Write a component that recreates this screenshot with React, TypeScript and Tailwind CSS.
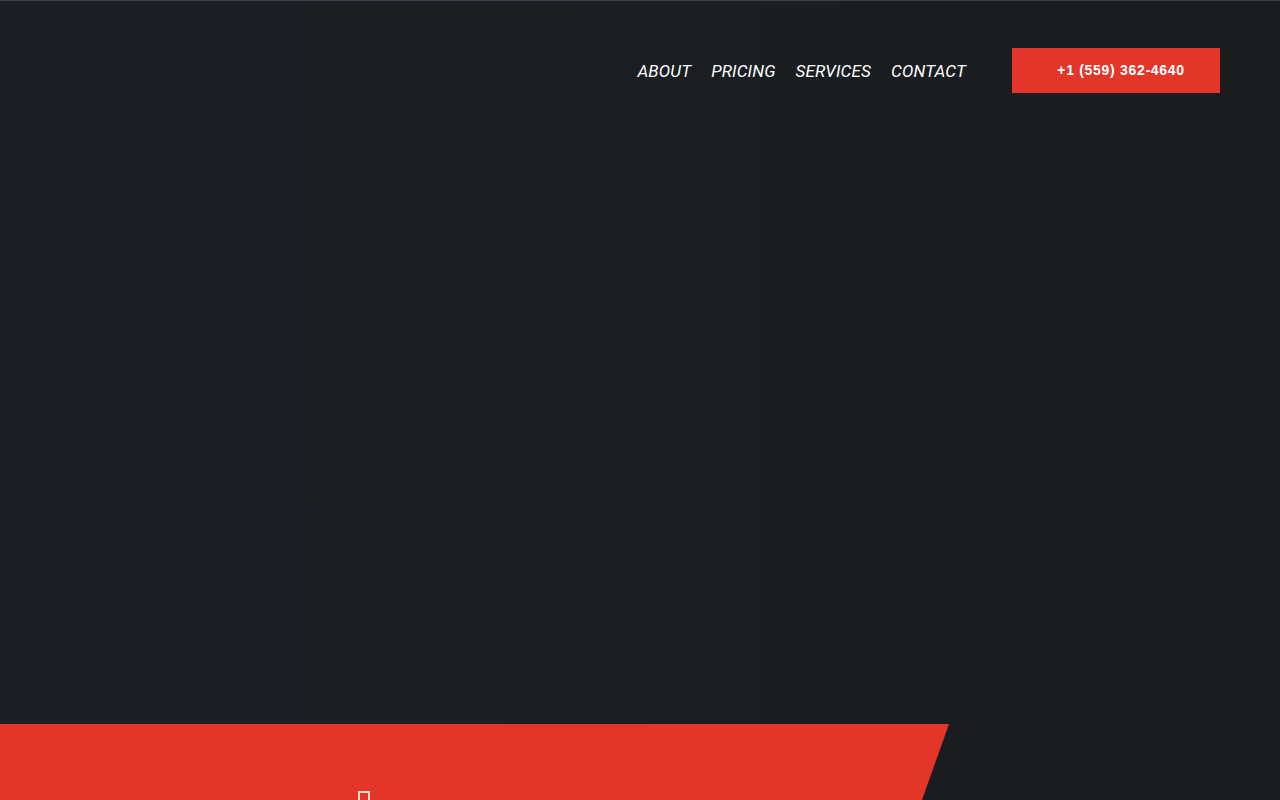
import React from 'react';

const navLinks = ['ABOUT', 'PRICING', 'SERVICES', 'CONTACT'];

export default function App() {
  return (
    <div className="h-[800px] w-full overflow-hidden bg-[linear-gradient(90deg,#1c1f26_0%,#1b1f23_40%,#181c1f_100%)]">
      {/* thin top rule */}
      <div className="h-px bg-[#3b4048]" />

      {/* Hero */}
      <section className="h-[723px] px-[60px]">
        <header className="flex items-center justify-end pt-[47px]">
          <nav className="mt-[2px] flex items-center gap-[20px] font-['Roboto',sans-serif] text-[17px] italic tracking-[0.01em] text-white">
            {navLinks.map((label) => (
              <a key={label} href={`#${label.toLowerCase()}`} className="leading-none hover:text-[#e33629]">
                {label}
              </a>
            ))}
          </nav>
          <a
            href="tel:+15593624640"
            className="ml-[46px] flex h-[45px] w-[208px] items-center justify-center pl-[10px] font-['Liberation_Sans',Arial,sans-serif] text-[14px] font-bold tracking-[0.05em] text-white bg-[#e33629]"
          >
            +1 (559) 362-4640
          </a>
        </header>
      </section>

      {/* Angled red band */}
      <section className="relative h-[200px] w-[949px] bg-[#e33629] [clip-path:polygon(0_0,949px_0,878px_200px,0_200px)]">
        <div className="pl-[358px] pt-[67px]">
          <span className="block h-[14px] w-[12px] border-2 border-[#f6d9cf]" />
        </div>
      </section>
    </div>
  );
}
